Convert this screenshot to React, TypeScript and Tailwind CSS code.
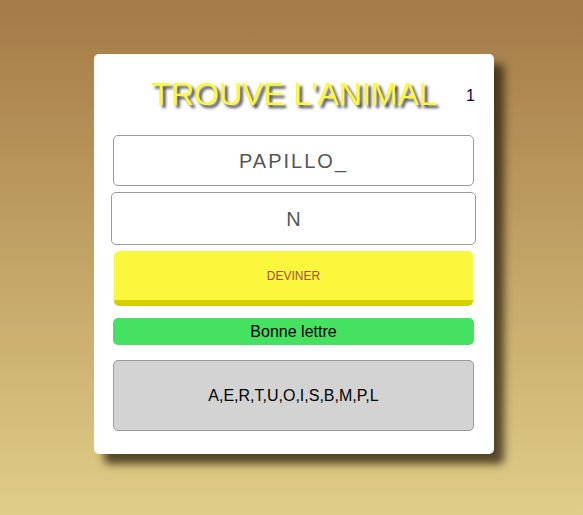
import React from 'react';

const letters = ['A', 'E', 'R', 'T', 'U', 'O', 'I', 'S', 'B', 'M', 'P', 'L'];

export default function App() {
  return (
    <div className="h-[515px] w-full bg-gradient-to-b from-[#a47a46] to-[#e0ce88] pt-[54px] pl-[94px] font-['Liberation_Sans',Arial,sans-serif]">
      <div className="flex h-[400px] w-[400px] flex-col rounded-[5px] bg-white pt-[22px] shadow-[10px_10px_9px_rgba(40,30,10,0.75)]">
        <div className="relative">
          <h1 className="text-center text-[32px] leading-[1.15] text-[#fbf93a] [text-shadow:3px_3px_3px_#3f3f3f]">
            TROUVE L'ANIMAL
          </h1>
          <span className="absolute top-[11px] right-[19px] text-[16px] leading-[1.15] text-[#00003a]">1</span>
        </div>

        <div className="mt-[22px] ml-[19px] flex h-[51px] w-[361px] items-center justify-center rounded-[5px] border border-[#9a9a9a] pt-[1px] text-[20px] tracking-[2px] text-[#555]">
          PAPILLO_
        </div>
        <div className="mt-[6px] ml-[17px] flex h-[53px] w-[365px] items-center justify-center rounded-[5px] border border-[#9a9a9a] pt-[1px] text-[20px] text-[#555]">
          N
        </div>
        <button className="mt-[6px] ml-[20px] flex h-[55px] w-[359px] items-center justify-center rounded-[5px] border-b-[6px] border-[#d3cf00] bg-[#faf73c] pt-[2px] text-[12px] text-[#a5503a]">
          DEVINER
        </button>
        <div className="mt-[12px] ml-[19px] flex h-[27px] w-[361px] items-center justify-center rounded-[5px] bg-[#45e160] pt-[1px] text-[16px] text-black">
          Bonne lettre
        </div>
        <div className="mt-[15px] ml-[19px] flex h-[71px] w-[361px] items-center justify-center rounded-[5px] border border-[#9a9a9a] bg-[#d3d3d3] pt-[2px] text-[16px] text-black">
          {letters.join(',')}
        </div>
      </div>
    </div>
  );
}
